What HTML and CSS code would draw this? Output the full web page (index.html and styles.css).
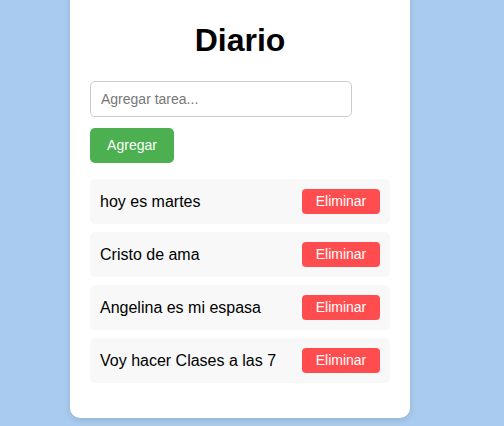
FILE: index.html
```html
<!DOCTYPE html>
<html lang="es">
<head>
<meta charset="utf-8">
<title>Diario</title>
<link rel="stylesheet" href="styles.css">
</head>
<body>
<div class="card">
  <h1 class="title">Diario</h1>
  <input class="task-input" type="text" placeholder="Agregar tarea...">
  <div><button class="add-btn">Agregar</button></div>
  <ul class="list">
    <li class="item"><span>hoy es martes</span><button class="del-btn">Eliminar</button></li>
    <li class="item"><span>Cristo de ama</span><button class="del-btn">Eliminar</button></li>
    <li class="item"><span>Angelina es mi espasa</span><button class="del-btn">Eliminar</button></li>
    <li class="item"><span>Voy hacer Clases a las 7</span><button class="del-btn">Eliminar</button></li>
  </ul>
</div>
</body>
</html>
```

FILE: styles.css
```css
html, body {
  margin: 0;
  height: 100%;
}
body {
  background: #a9cbef;
  font-family: "Liberation Sans", Arial, sans-serif;
  display: flex;
  justify-content: center;
  align-items: flex-end;
  padding: 0 24px 8px 0;
  box-sizing: border-box;
  overflow: hidden;
}
.card {
  flex: none;
  width: 300px;
  background: #fff;
  padding: 41px 20px 20px;
  border-radius: 10px;
  box-shadow: 0 2px 6px rgba(0, 0, 0, 0.12);
}
.title {
  margin: 0 0 22px;
  font-size: 32px;
  line-height: 37px;
  text-align: center;
  color: #000;
}
.task-input {
  display: block;
  height: 36px;
  box-sizing: border-box;
  width: 262px;
  padding: 0 10px;
  border: 1px solid #ccc;
  border-radius: 5px;
  font-family: inherit;
  font-size: 14px;
  color: #333;
  margin: 0 0 11px;
}
.task-input::placeholder {
  color: #777;
}
.add-btn {
  background: #4caf50;
  color: #fff;
  border: none;
  border-radius: 5px;
  font-family: inherit;
  font-size: 14px;
  line-height: 17px;
  padding: 9px 16px;
  width: 84px;
}
.list {
  list-style: none;
  margin: 0;
  padding: 16px 0 15px;
  display: flex;
  flex-direction: column;
  gap: 8px;
}
.item {
  display: flex;
  justify-content: space-between;
  align-items: center;
  background: #f8f8f8;
  border-radius: 5px;
  padding: 10px;
  font-size: 16px;
  color: #000;
}
.del-btn {
  background: #ff4d4f;
  color: #fff;
  border: none;
  border-radius: 4px;
  font-family: inherit;
  font-size: 14px;
  line-height: 17px;
  padding: 4px 0;
  width: 78px;
}
```
